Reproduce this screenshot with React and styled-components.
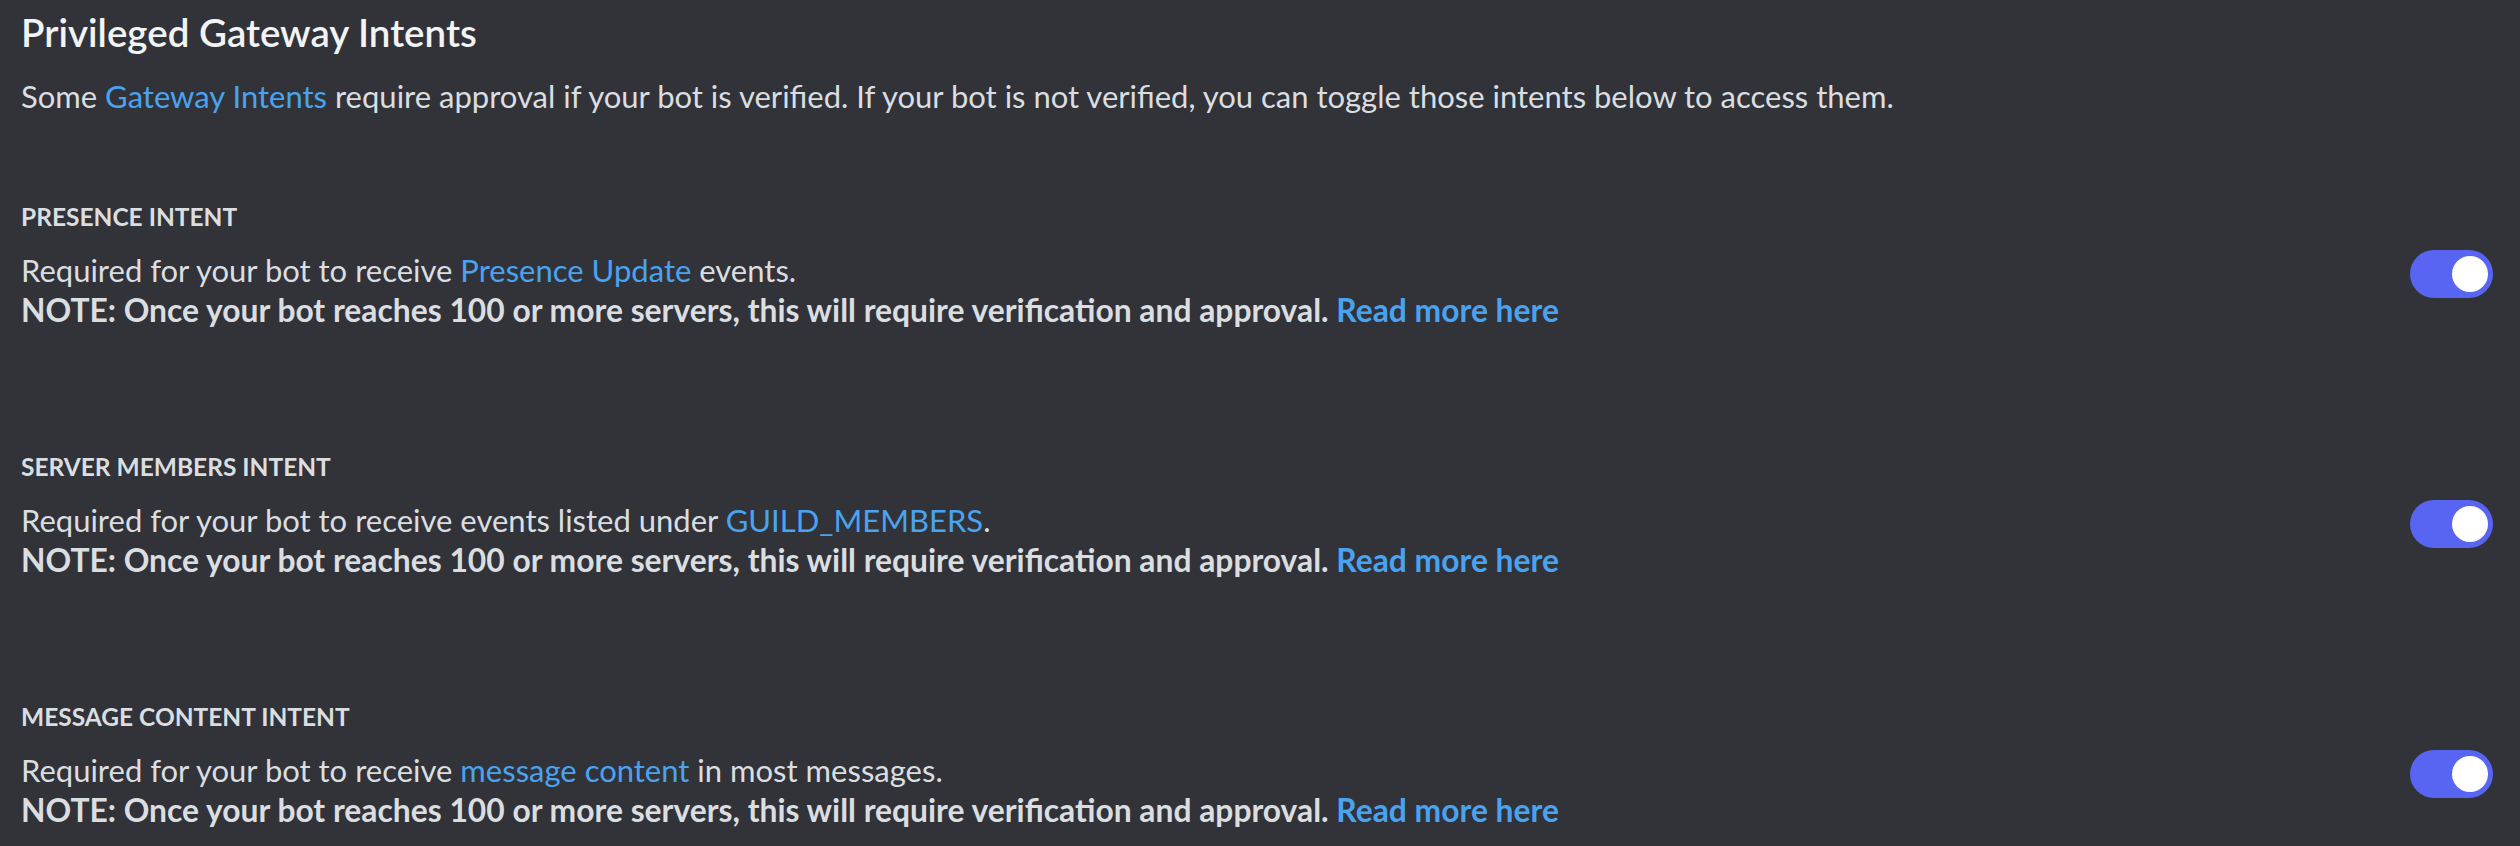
import React from 'react';
import styled, { createGlobalStyle } from 'styled-components';

const GlobalStyle = createGlobalStyle`
  html, body {
    margin: 0;
    padding: 0;
    background: #313338;
  }

  body {
    font-family: Lato, "Noto Sans", sans-serif;
    -webkit-font-smoothing: antialiased;
  }
`;

const Page = styled.div`
  min-height: 846px;
  box-sizing: border-box;
  padding: 10px 27px 0 21px;
  background: #313338;
  color: #dbdee1;
`;

const Title = styled.h2`
  margin: 0;
  font-size: 38.5px;
  line-height: 44px;
  font-weight: 600;
  color: #f2f3f5;
`;

const Lead = styled.p`
  margin: 22px 0 0;
  font-size: 31px;
  line-height: 40px;
`;

const Link = styled.a`
  color: #4aa3f0;
  text-decoration: none;
  cursor: pointer;
`;

const Section = styled.section`
  margin-top: ${props => (props.first ? '85px' : '121px')};
`;

const Label = styled.h3`
  margin: 0;
  font-size: 24.5px;
  line-height: 32px;
  font-weight: 700;
  text-transform: uppercase;
  color: #dbdee1;
`;

const Row = styled.div`
  display: flex;
  align-items: flex-start;
  justify-content: space-between;
  margin-top: 17px;
`;

const Text = styled.div`
  font-size: 31px;
  line-height: 40px;
  color: #dbdee1;
`;

const Note = styled.div`
  font-size: 31.8px;
  font-weight: 700;
  color: #dbdee1;
`;

const Switch = styled.button`
  flex: none;
  position: relative;
  width: 83px;
  height: 48px;
  padding: 0;
  border: none;
  border-radius: 24px;
  background: ${props => (props.on ? '#5865f2' : '#80848e')};
  cursor: pointer;

  &::after {
    content: '';
    position: absolute;
    top: 6px;
    right: ${props => (props.on ? '5px' : '42px')};
    width: 36px;
    height: 36px;
    border-radius: 50%;
    background: #ffffff;
  }
`;

const intents = [
  {
    name: 'Presence Intent',
    before: 'Required for your bot to receive ',
    link: 'Presence Update',
    after: ' events.',
  },
  {
    name: 'Server Members Intent',
    before: 'Required for your bot to receive events listed under ',
    link: 'GUILD_MEMBERS',
    after: '.',
  },
  {
    name: 'Message Content Intent',
    before: 'Required for your bot to receive ',
    link: 'message content',
    after: ' in most messages.',
  },
];

function Intent({ intent, first }) {
  return (
    <Section first={first}>
      <Label>{intent.name}</Label>
      <Row>
        <Text>
          <div>
            {intent.before}
            <Link>{intent.link}</Link>
            {intent.after}
          </div>
          <Note>
            NOTE: Once your bot reaches 100 or more servers, this will require verification and
            approval. <Link>Read more here</Link>
          </Note>
        </Text>
        <Switch on aria-label={intent.name} />
      </Row>
    </Section>
  );
}

export default function App() {
  return (
    <>
      <GlobalStyle />
      <Page>
        <Title>Privileged Gateway Intents</Title>
        <Lead>
          Some <Link>Gateway Intents</Link> require approval if your bot is verified. If your bot
          is not verified, you can toggle those intents below to access them.
        </Lead>
        {intents.map((intent, i) => (
          <Intent key={intent.name} intent={intent} first={i === 0} />
        ))}
      </Page>
    </>
  );
}
